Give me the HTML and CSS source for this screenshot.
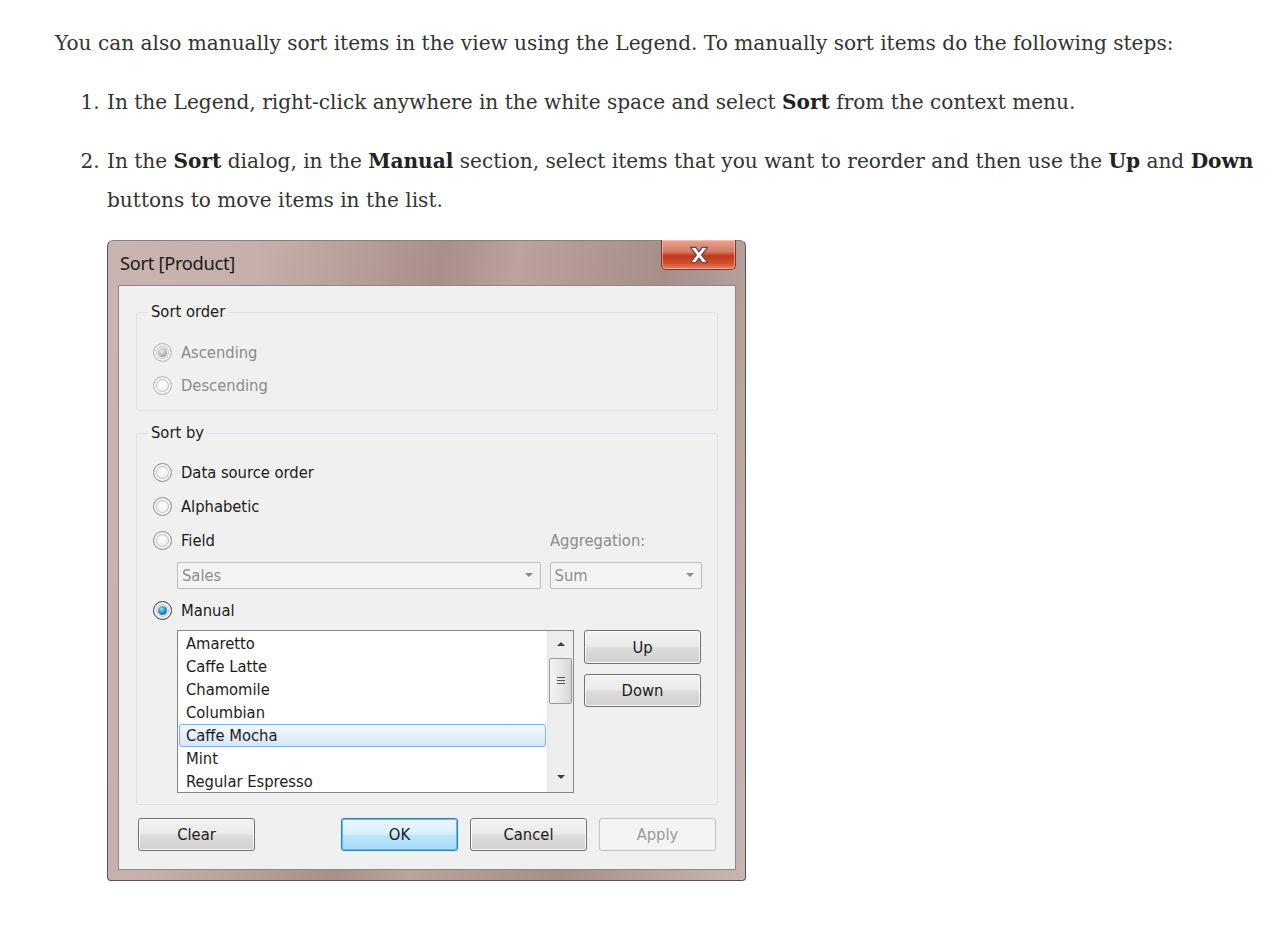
FILE: index.html
```html
<!DOCTYPE html>
<html>
<head>
<meta charset="utf-8">
<link rel="stylesheet" href="styles.css">
</head>
<body>
<div class="article">
  <p class="intro">You can also manually sort items in the view using the Legend. To manually sort items do the following steps:</p>
  <ol class="steps">
    <li>In the Legend, right-click anywhere in the white space and select <b>Sort</b> from the context menu.</li>
    <li>In the <b>Sort</b> dialog, in the <b>Manual</b> section, select items that you want to reorder and then use the <b>Up</b> and <b>Down</b> buttons to move items in the list.</li>
  </ol>

  <div class="dialog">
    <div class="titlebar">
      <span class="title">Sort [Product]</span>
      <div class="close">
        <svg width="28" height="20" viewBox="0 0 26 18">
          <path d="M5 2 L10 2 L13 6 L16 2 L21 2 L15.5 9 L21 16 L16 16 L13 12 L10 16 L5 16 L10.5 9 Z" fill="#fff" stroke="#6b4a45" stroke-width="1.2" stroke-linejoin="round"/>
        </svg>
      </div>
    </div>
    <div class="panel">
      <fieldset class="group group-order">
        <legend>Sort order</legend>
        <div class="radio-row disabled"><span class="radio checked-gray"></span>Ascending</div>
        <div class="radio-row disabled"><span class="radio"></span>Descending</div>
      </fieldset>

      <fieldset class="group group-by">
        <legend>Sort by</legend>
        <div class="radio-row"><span class="radio"></span>Data source order</div>
        <div class="radio-row"><span class="radio"></span>Alphabetic</div>
        <div class="radio-row field-row">
          <span class="radio"></span><span class="grow">Field</span><span class="agg-label">Aggregation:</span>
        </div>
        <div class="combo-row">
          <div class="combo combo-field"><span>Sales</span><i class="arrow"></i></div>
          <div class="combo combo-agg"><span>Sum</span><i class="arrow"></i></div>
        </div>
        <div class="radio-row"><span class="radio checked-blue"></span>Manual</div>
        <div class="manual-row">
          <div class="listbox">
            <ul class="items">
              <li>Amaretto</li>
              <li>Caffe Latte</li>
              <li>Chamomile</li>
              <li>Columbian</li>
              <li class="selected">Caffe Mocha</li>
              <li>Mint</li>
              <li>Regular Espresso</li>
            </ul>
            <div class="scrollbar">
              <i class="sb-up"></i>
              <div class="thumb"><span class="grip"></span></div>
              <div class="track"></div>
              <i class="sb-down"></i>
            </div>
          </div>
          <div class="side-buttons">
            <button class="btn">Up</button>
            <button class="btn">Down</button>
          </div>
        </div>
      </fieldset>

      <div class="button-row">
        <button class="btn clear">Clear</button>
        <button class="btn default">OK</button>
        <button class="btn">Cancel</button>
        <button class="btn disabled">Apply</button>
      </div>
    </div>
  </div>
</div>
</body>
</html>
```

FILE: styles.css
```css
html, body {
  margin: 0;
  padding: 0;
  background: #ffffff;
}

.article {
  padding: 24px 8px 0 55px;
  font-family: "DejaVu Serif", "Liberation Serif", serif;
  font-size: 20.1px;
  line-height: 39px;
  color: #333333;
}

.intro {
  margin: 0 0 20px 0;
  white-space: nowrap;
}

.steps {
  margin: 0 0 20px 0;
  padding-left: 51px;
}

.steps li {
  margin-bottom: 20px;
  padding-left: 1px;
}

.steps li:last-child {
  margin-bottom: 0;
}

.steps b {
  color: #222;
}

/* ---------- dialog ---------- */
.dialog {
  margin-left: 52px;
  width: 639px;
  height: 641px;
  box-sizing: border-box;
  border: 1px solid #5a5553;
  border-top-color: #8a8280;
  border-radius: 6px 6px 4px 4px;
  background: linear-gradient(100deg, #c9b4b0 0%, #c7b0ab 20%, #a88f8a 45%, #bba29d 55%, #a68e89 75%, #c8b6b3 100%);
  display: flex;
  flex-direction: column;
  padding: 0 9px 10px 10px;
  font-family: "DejaVu Sans Condensed", "Liberation Sans", sans-serif;
  font-size: 16.4px;
  color: #1b1b1b;
}

.titlebar {
  height: 44px;
  display: flex;
  align-items: center;
  justify-content: space-between;
}

.title {
  font-family: "Noto Sans", "Open Sans", sans-serif;
  font-size: 18.3px;
  color: #1a1a1a;
  margin-left: 2px;
  margin-bottom: 1px;
  letter-spacing: -0.3px;
}

.close {
  align-self: flex-start;
  width: 75px;
  height: 30px;
  margin-top: -1px;
  box-sizing: border-box;
  border: 1px solid #6e3b33;
  border-top: none;
  border-radius: 0 0 5px 5px;
  background: linear-gradient(180deg, #e8a390 0%, #d77a62 40%, #c3361c 55%, #d4502e 80%, #e4806a 100%);
  box-shadow: inset 0 0 0 1px rgba(255,220,210,0.5);
  display: flex;
  align-items: center;
  justify-content: center;
}

.panel {
  flex: 1;
  background: #f0f0f0;
  border: 1px solid #8d8887;
  padding: 16px 17px 0 17px;
  display: flex;
  flex-direction: column;
}

/* group boxes */
.group {
  margin: 0;
  padding: 0 0 0 14px;
  border: 1px solid #dbe3e8;
  border-radius: 3px;
  min-inline-size: 0;
}

.group legend {
  padding: 0 3px;
  margin-left: -3px;
  font-size: 16.4px;
  line-height: 20px;
  color: #1b1b1b;
}

.group-order {
  height: 109px;
  box-sizing: border-box;
  padding-top: 14px;
}

.group-by {
  margin-top: 12px;
  height: 382px;
  box-sizing: border-box;
  padding-top: 12px;
  padding-right: 15px;
}

.radio-row {
  display: flex;
  align-items: center;
  height: 34px;
  gap: 9px;
  margin-left: 2px;
}

.group-order .radio-row {
  height: 33px;
}

.radio-row.disabled {
  color: #8b8b8b;
}

.radio {
  width: 19px;
  height: 19px;
  box-sizing: border-box;
  border-radius: 50%;
  border: 1px solid #8e8e8e;
  background: radial-gradient(circle at 50% 40%, #ffffff 0%, #f0f0f0 45%, #d2d2d2 100%);
  box-shadow: inset 0 0 0 2px #f4f4f4, inset 0 0 0 3px #c4c4c4;
  flex: none;
  position: relative;
}

.disabled .radio {
  border-color: #b5b5b5;
}

.radio.checked-gray::after,
.radio.checked-blue::after {
  content: "";
  position: absolute;
  left: 4px;
  top: 4px;
  width: 9px;
  height: 9px;
  border-radius: 50%;
}

.radio.checked-gray::after {
  background: radial-gradient(circle at 40% 35%, #eeeeee 0%, #b5b5b5 55%, #8a8a8a 100%);
}

.radio.checked-blue {
  border-color: #3b3b3b;
}

.radio.checked-blue::after {
  background: radial-gradient(circle at 40% 35%, #9fe0ff 0%, #2a8fd0 45%, #0b4d85 100%);
}

.field-row .grow {
  flex: 1;
}

.agg-label {
  color: #8b8b8b;
  width: 152px;
}

.combo-row {
  display: flex;
  gap: 9px;
  padding-left: 26px;
  height: 36px;
  align-items: center;
}

.combo {
  height: 27px;
  box-sizing: border-box;
  border: 1px solid #bdbdbd;
  border-radius: 2px;
  background: #f3f3f3;
  color: #8e8e8e;
  display: flex;
  align-items: center;
  justify-content: space-between;
  padding: 0 7px 0 4px;
}

.combo-field {
  width: 365px;
}

.combo-agg {
  width: 153px;
}

.arrow {
  width: 0;
  height: 0;
  border-left: 4px solid transparent;
  border-right: 4px solid transparent;
  border-top: 4px solid #8a8a8a;
}

.manual-row {
  display: flex;
  gap: 10px;
  padding-left: 26px;
  margin-top: 3px;
}

.listbox {
  width: 397px;
  height: 163px;
  box-sizing: border-box;
  border: 1px solid #838790;
  background: #ffffff;
  display: flex;
  overflow: hidden;
}

.items {
  list-style: none;
  margin: 0;
  padding: 1px 0 0 1px;
  flex: 1;
}

.items li {
  height: 23px;
  line-height: 23px;
  padding-left: 7px;
  box-sizing: border-box;
  color: #1b1b1b;
  white-space: nowrap;
}

.items li.selected {
  background: linear-gradient(180deg, #f1f7fe 0%, #d7e8fb 100%);
  border: 1px solid #84acdd;
  border-radius: 3px;
  line-height: 21px;
  padding-left: 6px;
  margin-right: 1px;
}

.scrollbar {
  width: 25px;
  background: #eeeeee;
  border-left: 1px solid #e4e4e4;
  display: flex;
  flex-direction: column;
  align-items: center;
}

.sb-up, .sb-down {
  display: block;
  width: 0;
  height: 0;
  border-left: 4px solid transparent;
  border-right: 4px solid transparent;
}

.sb-up {
  border-bottom: 4px solid #3f3f3f;
  margin: 11px 0 12px;
}

.sb-down {
  border-top: 4px solid #3f3f3f;
  margin: 0 0 13px;
}

.thumb {
  width: 23px;
  height: 46px;
  box-sizing: border-box;
  border: 1px solid #9b9b9b;
  border-radius: 2px;
  background: linear-gradient(90deg, #f4f4f4 0%, #e7e7e7 50%, #d6d6d6 100%);
  display: flex;
  align-items: center;
  justify-content: center;
}

.grip {
  width: 8px;
  height: 8px;
  background:
    linear-gradient(#555, #555) 0 0 / 8px 1px no-repeat,
    linear-gradient(#555, #555) 0 3px / 8px 1px no-repeat,
    linear-gradient(#555, #555) 0 6px / 8px 1px no-repeat;
}

.track {
  flex: 1;
}

.side-buttons {
  display: flex;
  flex-direction: column;
  gap: 10px;
}

.btn {
  width: 117px;
  height: 34px;
  flex: none;
  box-sizing: border-box;
  border: 1px solid #707070;
  border-radius: 3px;
  background: linear-gradient(180deg, #f2f2f2 0%, #ebebeb 48%, #dddddd 52%, #cfcfcf 100%);
  box-shadow: inset 0 0 0 1px #fbfbfb;
  font-family: "DejaVu Sans Condensed", "Liberation Sans", sans-serif;
  font-size: 16.4px;
  color: #1b1b1b;
  padding: 0;
  margin: 0;
}

.side-buttons .btn + .btn {
  height: 33px;
}

.button-row {
  display: flex;
  gap: 12px;
  margin-top: 13px;
  padding: 0 2px;
}

.button-row .btn {
  height: 33px;
}

.btn.clear {
  margin-right: 74px;
}

.btn.default {
  border-color: #3c7fb1;
  background: linear-gradient(180deg, #eaf6fd 0%, #d9f0fc 48%, #bee6fd 52%, #a7d9f5 100%);
  box-shadow: inset 0 0 0 1px #48c4f5, 0 0 1px #48c4f5;
}

.btn.disabled {
  border-color: #c2c2c2;
  background: #f4f4f4;
  box-shadow: none;
  color: #9a9a9a;
}
```
